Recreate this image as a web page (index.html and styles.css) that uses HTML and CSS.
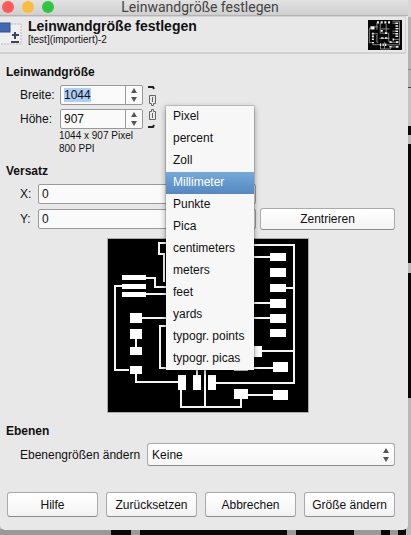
FILE: index.html
```html
<!DOCTYPE html>
<html lang="de">
<head>
<meta charset="utf-8">
<title>Leinwandgröße festlegen</title>
<link rel="stylesheet" href="styles.css">
</head>
<body>
<main class="dialog">
  <div class="titlebar">
    <div class="lights"><i class="light red"></i><i class="light yellow"></i><i class="light green"></i></div>
    <div class="window-title">Leinwandgröße festlegen</div>
  </div>
  <header class="header">
    <svg class="resize-icon" width="22" height="24" viewBox="0 0 22 24" aria-hidden="true">
      <rect x="-1" y="2" width="22" height="20" fill="#efefef" stroke="#b9b9b9" stroke-dasharray="2 1"/>
      <rect x="-1" y="1" width="11" height="9" fill="#4169b0" stroke="#2c4f91"/>
      <path d="M15 10v7M12 13h7M11 20h8" stroke="#3a465c" stroke-width="2"/>
    </svg>
    <div class="heading">
      <h1>Leinwandgröße festlegen</h1>
      <p>[test](importiert)-2</p>
    </div>
    <svg class="thumb" width="34" height="30" viewBox="107 238 202 175" preserveAspectRatio="none" aria-hidden="true">
      <rect x="107" y="238" width="202" height="175" fill="#080808"/>
      <g fill="none" stroke="#999" stroke-width="5">
        <path d="M160 255v40M146 278h20M124 286h-9v84h14M142 318h24M136 338v10M136 374v8h44M166 326h-6v42h8M181 390v17h60v-8M205 368v38M180 255v60h50v50M215 262v50M175 345h60M185 290h50"/>
        <path d="M252 245h42v138h-78M252 257h20M294 288h-10M252 303h20M252 318h20M262 351h32M236 368h37M247 395h26"/>
      </g>
      <g fill="#eee">
        <path d="M122 274h24v20h-24zM130 313h12v10h-12zM130 329h12v10h-12zM130 347h12v8h-12zM130 366h12v8h-12zM178 375h8v15h-8zM193 375h8v15h-8zM208 375h8v15h-8zM160 246h12v12h-12zM182 246h12v12h-12zM204 246h12v12h-12zM226 246h12v12h-12zM185 338h14v10h-14zM208 338h14v10h-14zM183 296h12v10h-12zM208 310h12v10h-12z"/>
        <path d="M270 253h16v8h-16zM270 268h16v9h-16zM270 284h16v8h-16zM270 299h16v9h-16zM270 314h16v9h-16zM270 329h16v8h-16zM253 346h9v11h-9zM234 362h14v9h-14zM273 362h15v10h-15zM234 389h14v10h-14zM273 390h15v10h-15z"/>
      </g>
    </svg>
  </header>

  <form class="body">
    <section>
      <h2>Leinwandgröße</h2>
      <div class="size">
        <div class="size-fields">
          <label for="w">Breite:</label>
          <div class="spin"><span class="entry"><input id="w" value="1044" class="selected"></span><span class="arrows"><button type="button" aria-label="Breite erhöhen"><i class="up"></i></button><button type="button" aria-label="Breite verringern"><i class="down"></i></button></span></div>
          <label for="h">Höhe:</label>
          <div class="spin"><span class="entry"><input id="h" value="907"></span><span class="arrows"><button type="button" aria-label="Höhe erhöhen"><i class="up"></i></button><button type="button" aria-label="Höhe verringern"><i class="down"></i></button></span></div>
        </div>
        <button type="button" class="chain" aria-label="Seitenverhältnis">
          <svg width="12" height="44" viewBox="0 0 12 44" fill="none" stroke="#666">
            <path d="M1 2h5l1 2" stroke="#222" stroke-width="2"/>
            <path d="M2.500 10.500h6v8h-2v2h-2v-2h-2z"/><path d="M5.500 12v5"/>
            <path d="M2.500 26.500h2v-2h2v2h2v8h-6z"/><path d="M5.500 28v5"/>
            <path d="M1 42h5l1-2" stroke="#222" stroke-width="2"/>
          </svg>
        </button>
      </div>
      <p class="info">1044 x 907 Pixel<br>800 PPI</p>
    </section>

    <section>
      <h2>Versatz</h2>
      <div class="offset">
        <label for="x">X:</label><input id="x" class="box" value="0">
        <label for="y">Y:</label><input id="y" class="box" value="0">
        <button type="button" class="btn center">Zentrieren</button>
      </div>
      <svg class="preview" width="202" height="175" viewBox="107 238 202 175" role="img" aria-label="Vorschau">
        <rect x="107.500" y="238.500" width="201" height="174" fill="#000" stroke="#aaa"/>
        <g fill="none" stroke="#f4f4f4" stroke-width="2">
          <path d="M166 243h-7v11h5v28M146 278h9v9h11M146 294h20M124 286h-9v84h14M142 318h24M136 338v10M136 374v8h44M166 326h-6v42h8M181 390v17h60v-8M205 368v38M197 370v8"/>
          <path d="M252 245h42v138h-78M252 257h20M294 288h-10M252 303h20M252 318h20M262 351h32M236 368h37M247 395h26"/>
        </g>
        <g fill="#fff">
          <path d="M122 275h24v5h-24zM122 284h24v5h-24zM122 292h24v5h-24zM130 313h12v10h-12zM130 329h12v10h-12zM130 347h12v8h-12zM130 366h12v8h-12zM178 375h8v15h-8zM193 375h8v15h-8zM208 375h8v15h-8z"/>
          <path d="M270 253h16v8h-16zM270 268h16v9h-16zM270 284h16v8h-16zM270 299h16v9h-16zM270 314h16v9h-16zM270 329h16v8h-16zM253 346h9v11h-9zM234 366h14v5h-14zM273 362h15v10h-15zM234 389h14v10h-14zM273 390h15v10h-15z"/>
        </g>
      </svg>
    </section>

    <section class="layers">
      <h2>Ebenen</h2>
      <div class="layer-row">
        <label for="layers">Ebenengrößen ändern</label>
        <div class="combo"><select id="layers"><option>Keine</option></select><span class="combo-arrows"><i class="up"></i><i class="down"></i></span></div>
      </div>
    </section>

    <footer>
      <button type="button" class="btn">Hilfe</button>
      <button type="button" class="btn">Zurücksetzen</button>
      <button type="button" class="btn">Abbrechen</button>
      <button type="button" class="btn">Größe ändern</button>
    </footer>
  </form>

  <ul class="menu" role="listbox" aria-label="Einheit">
    <li role="option">Pixel</li>
    <li role="option">percent</li>
    <li role="option">Zoll</li>
    <li role="option" aria-selected="true" class="active">Millimeter</li>
    <li role="option">Punkte</li>
    <li role="option">Pica</li>
    <li role="option">centimeters</li>
    <li role="option">meters</li>
    <li role="option">feet</li>
    <li role="option">yards</li>
    <li role="option">typogr. points</li>
    <li role="option">typogr. picas</li>
  </ul>
</main>
</body>
</html>
```
FILE: styles.css
```css
* { box-sizing: border-box; }
body {
  margin: 0;
  min-height: 100vh;
  padding-right: 3px;
  background:
    linear-gradient(to right, #999 0 111px, #080808 111px 131px, #999 131px 140px, #080808 140px 287px, #999 287px 296px, #080808 296px 354px, #999 354px 381px, #080808 381px 390px, #999 390px 398px, #080808 398px 406px, #bbb 406px) bottom / 100% 6px no-repeat,
    linear-gradient(#d8d8d8 0 17px, #b4b4b4 17px 69px, #888 69px 70px, #b4b4b4 70px 87px, #444 87px 88px, #c4c4c4 88px 126px, #080808 126px 135px, #bbb 135px 144px, #080808 144px 263px, #bbb 263px 273px, #080808 273px 398px, #b8b8b8 398px);
  font: 12px/14px "Liberation Sans", Arial, sans-serif;
  color: #111;
}
h1, h2, p, ul { margin: 0; padding: 0; }
button, input, select { font: inherit; color: inherit; }
.dialog {
  position: relative;
  background: #e8e8e8;
  border-radius: 0 0 5px 5px;
}
.titlebar {
  display: grid;
  grid-template-columns: 60px 1fr 68px;
  align-items: center;
  height: 16px;
  padding-bottom: 2px;
  background: linear-gradient(#e2e2e2, #cfcfcf);
  border-bottom: 1px solid #b4b4b4;
}
.lights { display: flex; gap: 8px; padding-left: 2px; }
.light { width: 12px; height: 12px; border-radius: 50%; }
.red { background: #fc5b57; }
.yellow { background: #fdbc40; }
.green { background: #2dc83f; }
.window-title { text-align: center; font: 14px/14px Roboto, sans-serif; color: #444; }
.header {
  display: flex;
  align-items: flex-end;
  height: 38px;
  margin-right: 2px;
  padding: 0 3px 2px 0;
  border: 1px solid #d2d2d2;
  border-width: 1px 1px 2px 0;
}
.resize-icon { margin: 0 6px 4px 0; }
.heading { flex: 1; align-self: flex-start; }
h1 { font-size: 14px; line-height: 18px; }
.heading p { font-size: 10px; line-height: 10px; }
.body { padding: 11px 13px 13px 6px; }
h2 { font-size: 12px; line-height: 14px; }
.size { display: flex; gap: 4px; padding: 6px 0 0 14px; }
.size-fields { display: grid; grid-template-columns: 36px 83px; gap: 3px 4px; align-items: center; }
.spin {
  display: flex;
  height: 20px;
  background: #fafafa;
  border: 1px solid #999;
  border-radius: 2px;
}
.entry { flex: 1; display: flex; padding-left: 3px; }
.entry input { width: 100%; min-width: 0; border: 0; padding: 0; background: none; outline: 0; }
.entry .selected { width: 27px; height: 14px; margin-top: 2px; background: #accef7; }
.arrows { display: flex; flex-direction: column; width: 17px; border-left: 1px solid #999; }
.arrows button { flex: 1; display: flex; align-items: center; justify-content: center; padding: 0; border: 0; background: none; }
.up, .down { width: 0; height: 0; border: 3px solid transparent; }
.up { border-top: 0; border-bottom: 5px solid #555; }
.down { border-bottom: 0; border-top: 5px solid #555; }
.chain { display: flex; padding: 0; border: 0; background: none; }
.info { padding-left: 53px; font-size: 10px; line-height: 13px; }
section + section { margin-top: 9px; }
.offset {
  display: grid;
  grid-template-columns: 14px 1fr 135px;
  gap: 4px;
  align-items: center;
  padding: 6px 0 0 14px;
}
.box {
  height: 20px;
  width: 100%;
  padding: 0 3px;
  background: #fafafa;
  border: 1px solid #999;
  border-radius: 2px;
}
.btn {
  height: 25px;
  padding: 0;
  background: linear-gradient(#fff, #f3f3f3);
  border: 1px solid #aaa;
  border-bottom-color: #8c8c8c;
  border-radius: 3px;
}
.center { grid-column: 3; height: 22px; grid-row: 2; }
.offset label { grid-column: 1; }
.preview { display: block; margin: 8px auto 0 101px; }
section.layers { margin-top: 11px; }
.layer-row { display: flex; align-items: center; gap: 7px; padding: 5px 0 0 14px; }
.combo { position: relative; flex: 1; }
.combo select {
  display: block;
  appearance: none;
  width: 100%;
  height: 23px;
  padding: 0 4px;
  background: linear-gradient(#fff, #f6f6f6);
  border: 1px solid #aaa;
  border-bottom-color: #8c8c8c;
  border-radius: 3px;
}
.combo-arrows { position: absolute; right: 6px; top: 5px; display: grid; gap: 4px; pointer-events: none; }
footer { display: grid; grid-template-columns: repeat(4, 1fr); gap: 8px; margin: 26px 0 0 1px; }
.menu {
  position: absolute;
  left: 166px;
  top: 106px;
  width: 88px;
  list-style: none;
  background: #f7f7f7;
  box-shadow: 0 0 0 1px #0002, 0 2px 6px #0006;
}
.menu li { padding: 0 7px 2px; line-height: 20px; white-space: nowrap; }
.menu .active { color: #fff; background: linear-gradient(#75a9d9, #5588c0); }
```
